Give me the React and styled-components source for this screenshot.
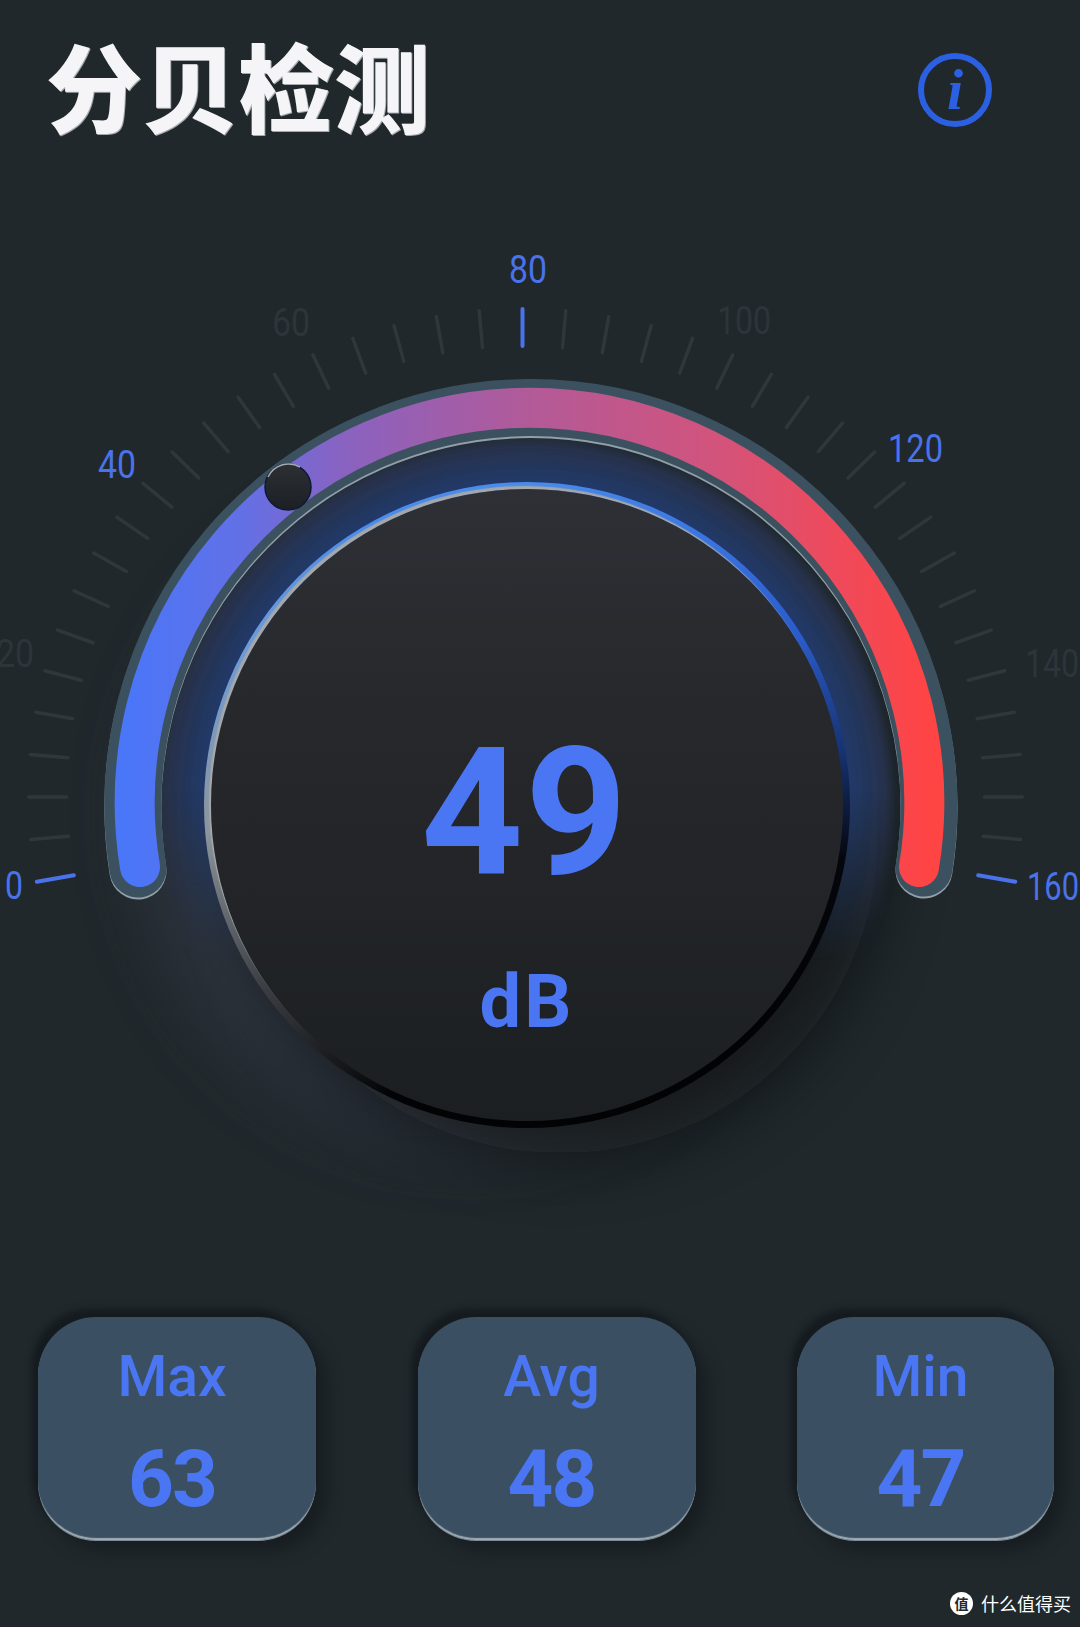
import React from 'react'
import styled, { createGlobalStyle } from 'styled-components'

const GlobalStyle = createGlobalStyle`
  html, body { margin: 0; padding: 0; background: #20282c; }
`

const BLUE = '#4a76f4'

const Page = styled.div`
  width: 1080px;
  height: 1627px;
  overflow: hidden;
  background: #20282c;
  display: flex;
  flex-direction: column;
  font-family: Roboto, "Noto Sans", sans-serif;
`

const Header = styled.header`
  height: 180px;
  padding: 0 88px 0 46px;
  display: flex;
  align-items: center;
  justify-content: space-between;
`

const Title = styled.h1`
  margin: 0 0 12px;
  font-family: "Noto Sans CJK SC", sans-serif;
  font-size: 96px;
  line-height: 1;
  font-weight: 900;
  color: #f5f5f8;
  text-shadow: 1px 1px 0 #a4a8ad;
`

const InfoButton = styled.div`
  width: 74px;
  height: 74px;
  box-sizing: border-box;
  border: 6px solid #2b60e2;
  border-radius: 50%;
  display: flex;
  align-items: center;
  justify-content: center;
  color: #2b60e2;
  font-family: "Liberation Serif", serif;
  font-style: italic;
  font-weight: 700;
  font-size: 58px;
  line-height: 1;
`

const Stage = styled.section`
  position: relative;
  height: 1137px;
  padding: 302px 26px 0 0;
  box-sizing: border-box;
  display: flex;
  justify-content: center;
  align-items: flex-start;
`

const GaugeArt = styled.svg`
  position: absolute;
  left: 0;
  top: 0;
  width: 1080px;
  height: 1137px;
  overflow: visible;
`

const ScaleLabel = styled.text`
  font-family: Roboto, sans-serif;
  font-size: 39px;
  fill: ${props => (props.$lit ? '#4a72ea' : '#2d353a')};
`

const Knob = styled.div`
  position: relative;
  width: 646px;
  height: 646px;
  padding: 7px;
  box-sizing: border-box;
  border-radius: 50%;
  background: conic-gradient(
    #4a8cea 0deg,
    #3c78e2 30deg,
    #2a5ccc 58deg,
    #173372 80deg,
    #04060c 100deg,
    #020304 130deg,
    #020304 205deg,
    #3a3d42 235deg,
    #8c959c 265deg,
    #6b9bd8 300deg,
    #4a8cea 330deg,
    #4a8cea 360deg
  );
`

const KnobFace = styled.div`
  height: 100%;
  padding-top: 235px;
  box-sizing: border-box;
  border-radius: 50%;
  display: flex;
  flex-direction: column;
  align-items: center;
  background: linear-gradient(180deg, #2e3035 0%, #26282c 35%, #222427 65%, #1b1f22 100%);
  box-shadow: -2px -3px 1px #a6a7a9;
  color: ${BLUE};
`

const Reading = styled.div`
  font-size: 178px;
  line-height: 178px;
  font-weight: 700;
  letter-spacing: 2px;
  transform: translateX(-2px);
`

const Unit = styled.div`
  margin-top: 65px;
  font-size: 74px;
  line-height: 70px;
  font-weight: 700;
  letter-spacing: 3px;
`

const StatRow = styled.div`
  padding: 0 26px 0 38px;
  display: flex;
  justify-content: space-between;
`

const StatCard = styled.div`
  width: ${props => props.$width}px;
  height: 223px;
  padding: 30px 10px 0 0;
  box-sizing: border-box;
  border-radius: 58px;
  background: #3a5062;
  color: ${BLUE};
  display: flex;
  flex-direction: column;
  align-items: center;
  box-shadow:
    inset 0 -3px 1px -1px #a0adb5,
    0 1px 0 0 #7d8b95,
    -6px -8px 6px #151b1f,
    10px 10px 16px #171d20;
`

const StatLabel = styled.div`
  font-size: 57px;
  line-height: 60px;
  font-weight: 500;
`

const StatValue = styled.div`
  margin-top: 32px;
  font-size: 80px;
  line-height: 80px;
  font-weight: 700;
  letter-spacing: -2px;
`

const Watermark = styled.footer`
  margin-top: auto;
  padding: 0 9px 12px 0;
  display: flex;
  justify-content: flex-end;
  align-items: center;
  gap: 8px;
  color: #fff;
  font-family: "Noto Sans CJK SC", sans-serif;
  font-size: 18px;
  line-height: 24px;
`

const WatermarkLogo = styled.span`
  width: 23px;
  height: 23px;
  border-radius: 50%;
  background: #fff;
  color: #20282c;
  font-size: 14px;
  font-weight: 700;
  line-height: 23px;
  text-align: center;
`

const labels = [
  { text: '0', x: 5, y: 899, w: 18, lit: true },
  { text: '20', x: 34, y: 667, w: 38, anchor: 'end' },
  { text: '40', x: 98, y: 478, w: 38, lit: true },
  { text: '60', x: 272, y: 336, w: 38 },
  { text: '80', x: 509, y: 283, w: 38, lit: true },
  { text: '100', x: 717, y: 334, w: 54 },
  { text: '120', x: 888, y: 462, w: 55, lit: true },
  { text: '140', x: 1025, y: 677, w: 54 },
  { text: '160', x: 1027, y: 900, w: 52, lit: true },
]

const stats = [
  { label: 'Max', value: 63, width: 278 },
  { label: 'Avg', value: 48, width: 278 },
  { label: 'Min', value: 47, width: 257 },
]

const ticks = Array.from({ length: 41 }, (_, i) => {
  const a = ((190 - i * 5) * Math.PI) / 180
  const point = r => [525.5 - 3 * Math.sin(a) + Math.cos(a) * r * 1.018, 797 - Math.sin(a) * r]
  const [x1, y1] = point(451)
  const [x2, y2] = point(488)
  return { x1, y1, x2, y2, lit: i % 20 === 0 }
})

const troughPath = 'M138 869 A398 398 0 1 1 924 868'
const bandPath = 'M140 865 A394.8 394.8 0 1 1 919 865'

function Gauge() {
  return (
    <GaugeArt viewBox="0 180 1080 1137">
      <defs>
        <linearGradient id="band" gradientUnits="userSpaceOnUse" x1="130" y1="0" x2="930" y2="0">
          <stop offset="0" stopColor="#4a76f8" />
          <stop offset="0.14" stopColor="#6370e6" />
          <stop offset="0.27" stopColor="#8a62c0" />
          <stop offset="0.5" stopColor="#b25a98" />
          <stop offset="0.72" stopColor="#d0547e" />
          <stop offset="0.88" stopColor="#ee4a5c" />
          <stop offset="1" stopColor="#ff4444" />
        </linearGradient>
        <radialGradient id="halo" gradientUnits="userSpaceOnUse" cx="527" cy="805" r="372">
          <stop offset="0.86" stopColor="#233a6c" />
          <stop offset="1" stopColor="#262f40" />
        </radialGradient>
        <linearGradient id="fade" gradientUnits="userSpaceOnUse" x1="0" y1="790" x2="0" y2="960">
          <stop offset="0" stopColor="#fff" />
          <stop offset="1" stopColor="#000" />
        </linearGradient>
        <mask id="haloFade" maskUnits="userSpaceOnUse" x="0" y="180" width="1080" height="1137">
          <rect x="0" y="180" width="1080" height="1137" fill="url(#fade)" />
        </mask>
        <linearGradient id="thumb" x1="0" y1="0" x2="0" y2="1">
          <stop offset="0" stopColor="#2c2f33" />
          <stop offset="1" stopColor="#1c2024" />
        </linearGradient>
        <filter id="soft" x="-30%" y="-30%" width="160%" height="160%">
          <feGaussianBlur stdDeviation="34" />
        </filter>
        <filter id="slight" x="-10%" y="-10%" width="120%" height="120%">
          <feGaussianBlur stdDeviation="5" />
        </filter>
      </defs>

      {ticks.map((t, i) => (
        <line
          key={i}
          x1={t.x1}
          y1={t.y1}
          x2={t.x2}
          y2={t.y2}
          stroke={t.lit ? '#4a72ea' : '#2f373c'}
          strokeWidth={t.lit ? 4 : 3.5}
          strokeLinecap="round"
        />
      ))}
      {labels.map(l => (
        <ScaleLabel
          key={l.text}
          x={l.x}
          y={l.y}
          $lit={l.lit}
          textAnchor={l.anchor || 'start'}
          textLength={l.w}
          lengthAdjust="spacingAndGlyphs"
        >
          {l.text}
        </ScaleLabel>
      ))}

      <circle cx="470" cy="815" r="330" fill="#3d4252" opacity="0.45" filter="url(#soft)" />
      <circle cx="560" cy="835" r="318" fill="#0b0f11" opacity="0.6" filter="url(#soft)" />
      <g mask="url(#haloFade)">
        <circle cx="527" cy="805" r="366" fill="url(#halo)" filter="url(#slight)" />
      </g>

      <path d={troughPath} fill="none" stroke="#929fa7" strokeWidth="57" strokeLinecap="round" transform="translate(0 2)" />
      <path d={troughPath} fill="none" stroke="#3c5160" strokeWidth="57" strokeLinecap="round" />
      <path d={bandPath} fill="none" stroke="url(#band)" strokeWidth="40" strokeLinecap="round" transform="translate(0 2)" />

      <circle cx="288" cy="487" r="23" fill="url(#thumb)" stroke="#0c1a38" strokeWidth="1.5" />
      <path d="M268 477 A23 23 0 0 1 300 467" fill="none" stroke="#a4aaad" strokeWidth="1.5" />
    </GaugeArt>
  )
}

export default function App() {
  return (
    <Page>
      <GlobalStyle />
      <Header>
        <Title>分贝检测</Title>
        <InfoButton>i</InfoButton>
      </Header>
      <Stage>
        <Gauge />
        <Knob>
          <KnobFace>
            <Reading>49</Reading>
            <Unit>dB</Unit>
          </KnobFace>
        </Knob>
      </Stage>
      <StatRow>
        {stats.map(s => (
          <StatCard key={s.label} $width={s.width}>
            <StatLabel>{s.label}</StatLabel>
            <StatValue>{s.value}</StatValue>
          </StatCard>
        ))}
      </StatRow>
      <Watermark>
        <WatermarkLogo>值</WatermarkLogo>
        什么值得买
      </Watermark>
    </Page>
  )
}
